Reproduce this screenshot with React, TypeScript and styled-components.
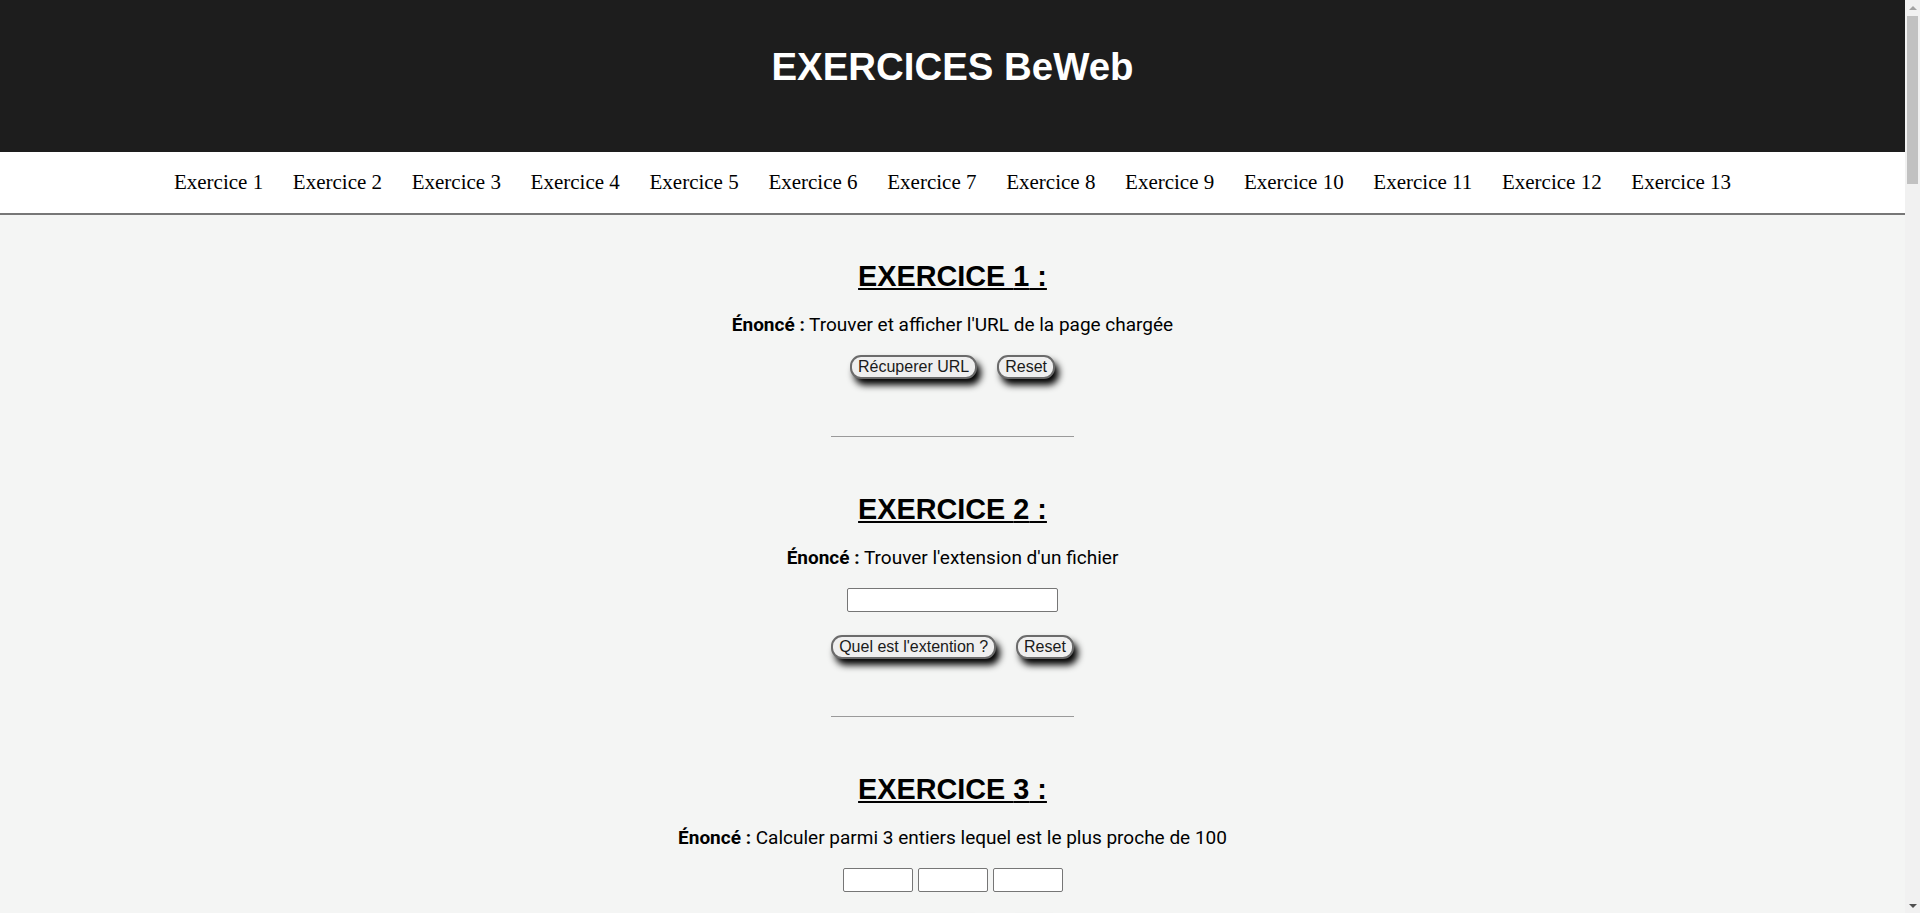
import React from "react";
import styled, { createGlobalStyle } from "styled-components";

const GlobalStyle = createGlobalStyle`
  html, body { margin: 0; padding: 0; }
  body {
    background: #f4f5f4;
    color: #000;
    font-family: "Liberation Sans", Arial, sans-serif;
  }
`;

const Page = styled.div`
  margin-right: 15px;
`;

const Header = styled.header`
  background: #1d1d1d;
  padding: 45px 0 63px;
`;

const Title = styled.h1`
  margin: 0;
  text-align: center;
  color: #fff;
  font-family: "Liberation Sans", Arial, sans-serif;
  font-size: 38.4px;
  line-height: 44px;
  font-weight: 700;
`;

const Nav = styled.nav`
  height: 61px;
  background: #fff;
  display: flex;
  justify-content: center;
  align-items: center;
  gap: 29.7px;
  border-bottom: 2px solid #777;
`;

const NavLink = styled.a`
  font-family: "Liberation Serif", "Times New Roman", serif;
  font-size: 21px;
  color: #000;
  text-decoration: none;
`;

const Main = styled.main`
  display: flex;
  flex-direction: column;
  align-items: center;
  padding: 44px 0 260px;
`;

const Section = styled.section`
  display: flex;
  flex-direction: column;
  align-items: center;
  gap: 20px;
`;

const Heading = styled.h2`
  margin: 0;
  font-family: "Liberation Sans", Arial, sans-serif;
  font-size: 28.8px;
  line-height: 35px;
  font-weight: 700;
  text-decoration: underline;
`;

const Statement = styled.p`
  margin: 0;
  font-family: Roboto, "Noto Sans", sans-serif;
  font-size: 19px;
  line-height: 21px;
  text-align: center;
`;

const Label = styled.strong`
  font-weight: 700;
`;

const Row = styled.div<{ $gap: number; $pad?: number }>`
  display: flex;
  justify-content: center;
  align-items: flex-start;
  gap: ${(p) => p.$gap}px;
  padding-bottom: ${(p) => p.$pad ?? 0}px;
`;

const Button = styled.button`
  font-family: "Liberation Sans", Arial, sans-serif;
  font-size: 16px;
  line-height: 18px;
  color: #1a1a1a;
  background: #efefef;
  padding: 1px 6px;
  border: 2px solid #6b6b6b;
  border-radius: 11px;
  box-shadow: 4px 6px 7px #000;
  cursor: pointer;
`;

const TextInput = styled.input<{ $w: number }>`
  box-sizing: border-box;
  width: ${(p) => p.$w}px;
  height: 24px;
  padding: 1px 3px;
  border: 1px solid #767676;
  border-radius: 2px;
  background: #fff;
  font-family: "Liberation Sans", Arial, sans-serif;
  font-size: 14px;
`;

const TextArea = styled.textarea`
  box-sizing: border-box;
  width: 320px;
  height: 90px;
  border: 1px solid #767676;
  border-radius: 2px;
  background: #fff;
  font-family: "Liberation Sans", Arial, sans-serif;
  font-size: 14px;
  resize: none;
`;

const Result = styled.p`
  margin: 0;
  min-height: 21px;
  font-family: Roboto, "Noto Sans", sans-serif;
  font-size: 19px;
  line-height: 21px;
`;

const Divider = styled.hr`
  width: 243px;
  height: 0;
  margin: 57px 0 55px;
  border: 0;
  border-top: 1px solid #9a9a9a;
`;

/* Window scrollbar, drawn over the right edge of the viewport */
const ScrollBar = styled.div`
  position: fixed;
  top: 0;
  right: 0;
  width: 15px;
  height: 100vh;
  background: #f1f1f1;
  display: flex;
  flex-direction: column;
  z-index: 10;
`;

const ScrollArrow = styled.div<{ $dir: "up" | "down" }>`
  height: 15px;
  flex: none;
  display: flex;
  align-items: center;
  justify-content: center;
  &::before {
    content: "";
    width: 0;
    height: 0;
    border-left: 4px solid transparent;
    border-right: 4px solid transparent;
    ${(p) =>
      p.$dir === "up"
        ? "border-bottom: 4px solid #a3a3a3;"
        : "border-top: 4px solid #505050;"}
  }
`;

const ScrollTrack = styled.div`
  flex: 1;
  display: flex;
  flex-direction: column;
`;

const ScrollThumb = styled.div`
  height: 168px;
  margin: 1px 2px 0;
  background: #c1c1c1;
`;

type Exo = {
  text: string;
  inputs?: number[];
  area?: boolean;
  buttons: string[];
  result?: boolean;
};

const exercises: Exo[] = [
  { text: "Trouver et afficher l'URL de la page chargée", buttons: ["Récuperer URL", "Reset"] },
  { text: "Trouver l'extension d'un fichier", inputs: [211], buttons: ["Quel est l'extention ?", "Reset"] },
  { text: "Calculer parmi 3 entiers lequel est le plus proche de 100", inputs: [70, 70, 70], buttons: ["Le plus proche ?", "Reset"], result: true },
  { text: "Vérifier si une année est bissextile", inputs: [211], buttons: ["Vérifier", "Reset"], result: true },
  { text: "Convertir une température de degrés Celsius en Fahrenheit", inputs: [211], buttons: ["Convertir", "Reset"], result: true },
  { text: "Afficher la date du jour au format jj/mm/aaaa", buttons: ["Afficher la date", "Reset"], result: true },
  { text: "Inverser une chaîne de caractères", inputs: [211], buttons: ["Inverser", "Reset"], result: true },
  { text: "Compter le nombre de voyelles dans une phrase", area: true, buttons: ["Compter", "Reset"], result: true },
  { text: "Calculer la somme des nombres d'un tableau", inputs: [211], buttons: ["Calculer", "Reset"], result: true },
  { text: "Trouver le plus grand nombre parmi une liste", inputs: [211], buttons: ["Le plus grand ?", "Reset"], result: true },
  { text: "Vérifier si un mot est un palindrome", inputs: [211], buttons: ["Palindrome ?", "Reset"], result: true },
  { text: "Calculer la factorielle d'un nombre", inputs: [211], buttons: ["Calculer", "Reset"], result: true },
  { text: "Générer un nombre aléatoire entre deux bornes", inputs: [70, 70], buttons: ["Générer", "Reset"], result: true },
];

export default function App() {
  return (
    <>
      <GlobalStyle />
      <Page>
        <Header>
          <Title>EXERCICES BeWeb</Title>
        </Header>
        <Nav>
          {exercises.map((_, i) => (
            <NavLink key={i} href={`#exercice${i + 1}`}>
              Exercice {i + 1}
            </NavLink>
          ))}
        </Nav>
        <Main>
          {exercises.map((exo, i) => (
            <React.Fragment key={i}>
              {i > 0 && <Divider />}
              <Section id={`exercice${i + 1}`}>
                <Heading>EXERCICE {i + 1} :</Heading>
                <Statement>
                  <Label>Énoncé :</Label> {exo.text}
                </Statement>
                {exo.inputs && (
                  <Row $gap={5} $pad={3}>
                    {exo.inputs.map((w, j) => (
                      <TextInput key={j} type="text" $w={w} />
                    ))}
                  </Row>
                )}
                {exo.area && <TextArea />}
                <Row $gap={20}>
                  {exo.buttons.map((b) => (
                    <Button key={b} type="button">
                      {b}
                    </Button>
                  ))}
                </Row>
                {exo.result && <Result />}
              </Section>
            </React.Fragment>
          ))}
        </Main>
      </Page>
      <ScrollBar aria-hidden="true">
        <ScrollArrow $dir="up" />
        <ScrollTrack>
          <ScrollThumb />
        </ScrollTrack>
        <ScrollArrow $dir="down" />
      </ScrollBar>
    </>
  );
}
